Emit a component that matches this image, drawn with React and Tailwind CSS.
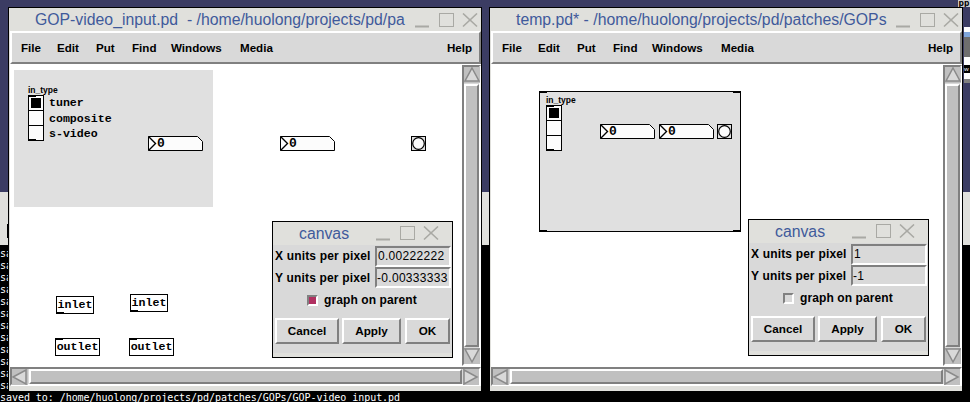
const sans = 'font-["Liberation_Sans",Arial,sans-serif]';
const mono = 'font-["Liberation_Mono","Courier_New",monospace]';

const termLine = 'saved to: /home/huolong/projects/pd/patches/GOPs/GOP-video_input.pd';

function WinButtons({ className }) {
  return (
    <svg width="63" height="15" viewBox="0 0 63 15" className={className} aria-hidden="true" fill="none" stroke="#a9a9a4">
      <path d="M0 13.5H14" strokeWidth="2" />
      <rect x="24.5" y="0.5" width="14" height="13" />
      <path d="M48 0.5L62 13.5M62 0.5L48 13.5" strokeWidth="1.6" />
    </svg>
  );
}

function Arrow({ dir }) {
  const shapes = {
    up: '8,1 15,14 1,14',
    down: '1,1 15,1 8,14',
    left: '1,8 14,1 14,15',
    right: '1,1 14,8 1,15',
  };
  return (
    <svg width="16" height="16" viewBox="0 0 16 16" className="shrink-0" aria-hidden="true">
      <rect width="16" height="16" fill="#c0c0c0" />
      <polygon points={shapes[dir]} fill="#d9d9d9" stroke="#8a8a8a" strokeWidth="1.5" />
    </svg>
  );
}

function VScroll() {
  return (
    <div className="mt-px flex h-[301px] w-[19px] shrink-0 flex-col border-2 border-t-[#808080] border-l-[#808080] border-r-white border-b-white bg-[#d9d9d9]">
      <Arrow dir="up" />
      <div className="my-px flex-1 border-2 border-t-white border-l-white border-r-[#808080] border-b-[#808080] bg-[#c0c0c0]" />
      <Arrow dir="down" />
    </div>
  );
}

function HScroll() {
  return (
    <div className="flex h-[19px] shrink-0 border-2 border-t-[#808080] border-l-[#808080] border-r-white border-b-white bg-[#d9d9d9]">
      <Arrow dir="left" />
      <div className="mx-px flex-1 border-2 border-t-white border-l-white border-r-[#808080] border-b-[#808080] bg-[#c0c0c0]" />
      <Arrow dir="right" />
    </div>
  );
}

const menus = [
  ['File', 'w-[36px]'],
  ['Edit', 'w-[39px]'],
  ['Put', 'w-[36px]'],
  ['Find', 'w-[39px]'],
  ['Windows', 'w-[69px]'],
  ['Media', 'w-[40px]'],
];

function Window({ className, title, children }) {
  return (
    <div className={`absolute top-[7px] flex h-[384px] w-[474px] flex-col border border-b-0 border-black bg-[#e0e0dc] ${className}`}>
      <div className="relative h-[23px] shrink-0">
        <div className={`${sans} h-[23px] whitespace-pre pl-[26px] text-[15.8px] leading-[23px] text-[#3f5a9b]`}>{title}</div>
        <WinButtons className="absolute left-[406px] top-[5px]" />
      </div>
      <div className="ml-px flex h-[33px] shrink-0 items-center border-2 border-t-white border-l-white border-r-[#808080] border-b-[#808080] bg-[#d9d9d9] pl-[9px] pr-[7px]">
        <div className={`${sans} flex flex-1 text-[11.6px] font-bold text-black`}>
          {menus.map(([name, w]) => (
            <span key={name} className={w}>{name}</span>
          ))}
          <span className="ml-auto">Help</span>
        </div>
      </div>
      <div className="ml-px flex h-[303px] shrink-0 bg-white">
        <div className="relative flex-1 overflow-hidden bg-white">{children}</div>
        <VScroll />
      </div>
      <div className="ml-px shrink-0">
        <HScroll />
      </div>
    </div>
  );
}

function Dialog({ className, x, y, checked }) {
  return (
    <div className={`absolute flex h-[137px] w-[181px] flex-col border border-black bg-[#e0e0dc] ${className}`}>
      <div className="relative h-[23px] shrink-0">
        <span className={`${sans} absolute left-[26px] top-0 text-[15.8px] leading-[23px] text-[#3f5a9b]`}>canvas</span>
        <WinButtons className="absolute left-[103px] top-[4px]" />
      </div>
      <div className={`${sans} flex h-[108px] flex-col bg-[#d9d9d9] text-[12px] font-bold text-black`}>
        <div className="flex h-[22px] items-center pl-[2px]">
          <span className="w-[100px] whitespace-pre tracking-[0.17px]">X units per pixel</span>
          <div className="flex h-[21px] w-[76px] items-center border-2 border-t-[#808080] border-l-[#808080] border-r-white border-b-white pl-px text-[12px] font-normal tracking-[0.3px]">{x}</div>
        </div>
        <div className="flex h-[21px] items-center pl-[2px]">
          <span className="w-[100px] whitespace-pre tracking-[0.17px]">Y units per pixel</span>
          <div className="flex h-[21px] w-[76px] items-center border-2 border-t-[#808080] border-l-[#808080] border-r-white border-b-white text-[12px] font-normal tracking-[0.3px]">{y}</div>
        </div>
        <div className="mt-[6px] flex h-[12px] items-center pl-[34px]">
          <div className={`h-[11px] w-[11px] border-2 border-t-[#808080] border-l-[#808080] border-r-white border-b-white ${checked ? 'bg-[#b03060]' : 'bg-[#d9d9d9]'}`} />
          <span className="ml-[6px] tracking-[0.1px]">graph on parent</span>
        </div>
        <div className="mt-[12px] flex h-[26px] pl-[2px] text-[11.7px]">
          <div className="flex w-[64px] items-center justify-center border-2 border-t-white border-l-white border-r-[#808080] border-b-[#808080]">Cancel</div>
          <div className="ml-[3px] flex w-[59px] items-center justify-center border-2 border-t-white border-l-white border-r-[#808080] border-b-[#808080]">Apply</div>
          <div className="ml-[4px] flex w-[45px] items-center justify-center border-2 border-t-white border-l-white border-r-[#808080] border-b-[#808080]">OK</div>
        </div>
      </div>
    </div>
  );
}

function Radio({ className }) {
  return (
    <div className={`absolute h-[46px] w-[16px] border border-black bg-[#fcfcfc] ${className}`}>
      <div className="absolute -left-px -top-px h-[2px] w-[8px] bg-black" />
      <div className="absolute left-[2px] top-[2px] h-[10px] w-[10px] bg-black" />
      <div className="absolute left-0 right-0 top-[14px] h-px bg-black" />
      <div className="absolute left-0 right-0 top-[29px] h-px bg-black" />
      <div className="absolute -bottom-px -left-px h-[2px] w-[8px] bg-black" />
    </div>
  );
}

function NumberBox({ className }) {
  return (
    <div className={`absolute h-[15px] w-[55px] ${className}`}>
      <svg width="55" height="15" viewBox="0 0 55 15" className="absolute inset-0" aria-hidden="true" fill="#fcfcfc" stroke="#000">
        <path d="M0.5 0.5H49.5L54.5 5.5V14.5H0.5Z" />
        <path d="M0.5 0.5L7.5 7.5L0.5 14.5" fill="none" strokeWidth="1.4" />
      </svg>
      <span className={`${mono} absolute left-[9px] top-0 text-[13px] font-bold leading-[15px] text-black`}>0</span>
    </div>
  );
}

function Bang({ className }) {
  return (
    <svg width="15" height="15" viewBox="0 0 15 15" className={`absolute ${className}`} aria-hidden="true">
      <rect x="0.5" y="0.5" width="14" height="14" fill="#e0e0e0" stroke="#000" />
      <circle cx="7.5" cy="7.5" r="5.8" fill="#fcfcfc" stroke="#000" strokeWidth="1.2" />
    </svg>
  );
}

function TypeLabel({ className }) {
  return <span className={`${sans} absolute text-[8.5px] font-bold leading-[10px] text-black ${className}`}>in_type</span>;
}

function RadioText({ className, children }) {
  return <span className={`${mono} absolute text-[11.6px] font-bold leading-[14px] text-black ${className}`}>{children}</span>;
}

function PdBox({ className, outlet, children }) {
  return (
    <div className={`${mono} absolute flex h-[18px] items-center justify-center border border-black bg-white text-[11.6px] font-bold text-black ${className}`}>
      {children}
      <div className={`absolute -left-px h-[2px] w-[8px] bg-black ${outlet ? '-top-px' : '-bottom-px'}`} />
    </div>
  );
}

function Corner({ className }) {
  return <div className={`absolute h-[2px] w-[8px] bg-black ${className}`} />;
}

function Backdrop() {
  const rows = Array.from({ length: 12 }, (_, i) => i);
  return (
    <>
      <div className="absolute inset-x-0 top-[192px] h-[53px] bg-[#e0e0dc]">
        <div className="absolute left-[7px] top-[32px] h-[14px] w-px bg-black" />
      </div>
      <div className='absolute inset-x-0 bottom-0 top-[245px] bg-black pt-[3px] font-["DejaVu_Sans_Mono",monospace] text-[10px] leading-[12px] tracking-[-0.05px] text-white'>
        {rows.map((i) => (
          <div key={i} className="h-[12px] w-[8px] overflow-hidden whitespace-pre">sa</div>
        ))}
        <div className="h-[12px] whitespace-pre">{termLine}</div>
      </div>
      <div className="absolute left-[958px] top-0 h-[7px] w-[12px] overflow-hidden bg-[#cfcfcf] text-center font-['DejaVu_Sans_Mono',monospace] text-[9px] font-bold leading-[6px] text-black">pp</div>
      <div className="absolute left-[964px] top-[27px] flex w-[6px] flex-col">
        <div className="h-[5px] bg-white" />
        <div className="h-[5px] bg-[#7fa6dc]" />
        <div className="h-[20px] bg-[#6e6e6e]" />
        <div className="h-[8px] bg-white" />
        <div className="h-[8px] bg-black text-[6px] leading-[8px] text-white">w</div>
        <div className="h-[6px] bg-white" />
        <div className="h-[4px] bg-[#808080]" />
      </div>
    </>
  );
}

export default function App() {
  return (
    <div className="relative h-[402px] w-[970px] overflow-hidden bg-[#3b3c63]">
      <Backdrop />

      <Window className="left-[8px]" title="GOP-video_input.pd  - /home/huolong/projects/pd/pa">
        <div className="absolute left-[4px] top-[6px] h-[137px] w-[199px] bg-[#e0e0e0]" />
        <TypeLabel className="left-[18px] top-[21px]" />
        <Radio className="left-[18px] top-[31px]" />
        <RadioText className="left-[39px] top-[32px]">tuner</RadioText>
        <RadioText className="left-[39px] top-[48px]">composite</RadioText>
        <RadioText className="left-[39px] top-[63px]">s-video</RadioText>
        <NumberBox className="left-[138px] top-[72px]" />
        <NumberBox className="left-[270px] top-[72px]" />
        <Bang className="left-[401px] top-[72px]" />
        <PdBox className="left-[46px] top-[232px] w-[38px]">inlet</PdBox>
        <PdBox className="left-[120px] top-[230px] w-[38px]">inlet</PdBox>
        <PdBox outlet className="left-[45px] top-[274px] w-[45px]">outlet</PdBox>
        <PdBox outlet className="left-[119px] top-[274px] w-[45px]">outlet</PdBox>
      </Window>

      <Window className="left-[489px]" title="temp.pd* - /home/huolong/projects/pd/patches/GOPs">
        <div className="absolute left-[48px] top-[27px] h-[141px] w-[202px] border border-black bg-[#e0e0e0]">
          <Corner className="-left-px -top-px" />
          <Corner className="-right-px -top-px" />
          <Corner className="-bottom-px -left-px" />
          <Corner className="-bottom-px -right-px" />
          <TypeLabel className="left-[6px] top-[3px]" />
          <Radio className="left-[6px] top-[13px]" />
          <NumberBox className="left-[60px] top-[32px]" />
          <NumberBox className="left-[119px] top-[32px]" />
          <Bang className="left-[177px] top-[32px]" />
        </div>
      </Window>

      <Dialog className="left-[272px] top-[221px]" x="0.00222222" y="-0.00333333" checked />
      <Dialog className="left-[748px] top-[219px]" x="1" y="-1" />
    </div>
  );
}
